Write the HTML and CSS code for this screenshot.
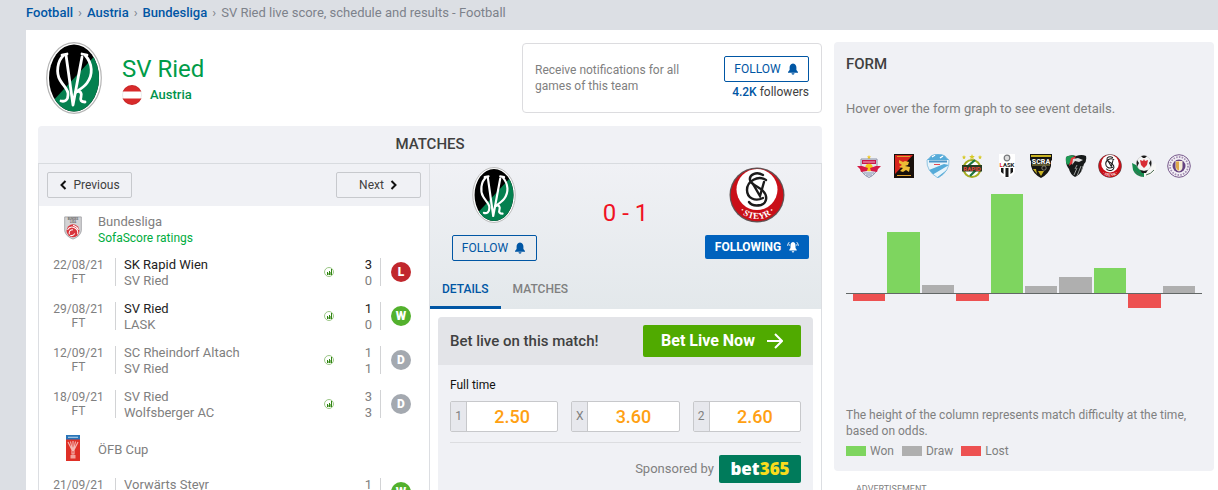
FILE: index.html
```html
<!DOCTYPE html>
<html lang="en">
<head>
<meta charset="utf-8">
<meta name="viewport" content="width=device-width, initial-scale=1">
<title>SV Ried live score, schedule and results - Football</title>
<link rel="stylesheet" href="styles.css">
</head>
<body>
<svg class="defs" aria-hidden="true">
  <defs>
    <clipPath id="ried-clip"><ellipse cx="28" cy="36" rx="25" ry="33.500"/></clipPath>
    <clipPath id="flag-clip"><circle cx="10" cy="10" r="10"/></clipPath>
    <clipPath id="wac-clip"><path d="M2 3q5-3 10-1q6-2 10 0q1 5-2 8l-2 6q-2 5-7 7q-5-3-6-8q-4-5-3-12z"/></clipPath>
    <clipPath id="hart-clip"><path d="M1 6Q4 4 5 2Q12-2 19 2Q20 4 23 6Q24 17 12 24Q0 17 1 6z"/></clipPath>
    <symbol id="ried" viewBox="0 0 56 72">
      <ellipse cx="28" cy="36" rx="27.3" ry="35.3" fill="#fff" stroke="#b5b5b5" stroke-width="1.2"/>
      <g clip-path="url(#ried-clip)">
        <path d="M0 0h56v72H0z" fill="#000"/>
        <path d="M56 6L6 60v12h50z" fill="#04804f"/>
      </g>
      <g fill="none" stroke="#fff" stroke-width="2.8" stroke-linecap="round" stroke-linejoin="round">
        <path d="M16 13l5-1M18 13C11 19 10 31 14 38c4 7 9 10 8 15c0 5-3 7-7 6"/>
        <path d="M20 13L27 63L36 15"/>
        <path d="M36 12l5 1M39 13c8 9 8 20 2 28c-3 4-8 7-11 9"/>
        <path d="M30 50c5-2 6 2 5 5c-1 3 0 5 4 5"/>
      </g>
    </symbol>
    <symbol id="steyr" viewBox="0 0 56 56">
      <circle cx="28" cy="28" r="27.5" fill="#5f5354"/>
      <circle cx="28" cy="28" r="26.3" fill="#c90f18"/>
      <circle cx="28" cy="22.5" r="20.5" fill="#fff"/>
      <g fill="none" stroke="#1b1b1b" stroke-width="2.4" stroke-linecap="round">
        <path d="M34 8C27 4 20 8 21 13c1 5 8 6 13 11c5 5 4 12-2 14c-5 1-10 0-12-3"/>
        <path d="M37 13c-8-5-19 1-19 10c0 8 8 12 16 8"/>
        <path d="M24 17l7 12l4-14"/>
      </g>
      <path id="steyr-arc" d="M6 37Q13 52 28 52Q43 52 50 37" fill="none"/>
      <text class="crest-steyr"><textPath href="#steyr-arc" startOffset="50%" text-anchor="middle">· STEYR ·</textPath></text>
    </symbol>
    <symbol id="bell" viewBox="0 0 12 12">
      <path d="M6 0.400C3.500 0.800 2.600 2.500 2.600 4.500V7L1 9v.7h10V9L9.400 7V4.500C9.400 2.500 8.500.8 6 .4z" fill="currentColor"/>
      <path d="M4.500 10.300h3c0 .8-.6 1.400-1.500 1.400s-1.500-.6-1.500-1.400z" fill="currentColor"/>
    </symbol>
    <symbol id="stats" viewBox="0 0 10 10">
      <circle cx="5" cy="5" r="4.500" fill="none" stroke="#8fbf78" stroke-width=".9"/>
      <path d="M3 5h1v3H3zM5 4h1v4H5zM7 2h1v6H7z" fill="#2f8412"/><path d="M4 6h1v2H4zM6 5h1v3H6z" fill="#8fbf78"/>
    </symbol>
  </defs>
</svg>

<nav class="breadcrumb" aria-label="Breadcrumb">
  <a href="#">Football</a><span>›</span><a href="#">Austria</a><span>›</span><a href="#">Bundesliga</a><span>›</span><span class="current">SV Ried live score, schedule and results - Football</span>
</nav>

<div class="page">
  <main class="main">
    <header class="team">
      <svg class="team-crest"><use href="#ried"/></svg>
      <div class="team-info">
        <h1>SV Ried</h1>
        <a class="country" href="#">
          <svg class="flag" viewBox="0 0 20 20"><g clip-path="url(#flag-clip)"><path fill="#fff" d="M0 0h20v20H0z"/><path fill="#d82a2b" d="M0 0h20v6.500H0zM0 13.500h20V20H0z"/></g><circle cx="10" cy="10" r="9.500" fill="none" stroke="#000" stroke-opacity=".08"/></svg>
          Austria
        </a>
      </div>
      <div class="notify">
        <p>Receive notifications for all games of this team</p>
        <div class="notify-side">
          <button class="btn btn-outline">FOLLOW <svg class="bell"><use href="#bell"/></svg></button>
          <div class="followers"><b>4.2K</b> followers</div>
        </div>
      </div>
    </header>

    <section class="matches">
      <h2 class="matches-title">MATCHES</h2>
      <div class="panels">
        <div class="list">
          <div class="pager">
            <button class="btn btn-page"><svg class="chev" viewBox="0 0 8 10"><path d="M6.500 1L2.500 5l4 4"/></svg>Previous</button>
            <button class="btn btn-page">Next<svg class="chev" viewBox="0 0 8 10"><path d="M1.500 1l4 4l-4 4"/></svg></button>
          </div>
          <div class="league">
            <svg class="league-logo" viewBox="0 0 24 26">
              <path d="M3 1h18v15q-1 6-9 9q-8-3-9-9z" fill="#d3d3d5" stroke="#a5a5a8"/>
              <text x="12" y="4.500" class="crest-tiny" fill="#666">BUNDES</text><text x="12" y="8" class="crest-tiny" fill="#666">LIGA</text>
              <circle cx="12" cy="16" r="7" fill="#d9343c"/>
              <path d="M6 15q3-5 8-2q4 2 3 7M8 20q-1-5 4-5M12 10q4 1 6 5M9 21q3 1 5-2" fill="none" stroke="#fff" stroke-width="1.100"/>
            </svg>
            <div><a class="league-name" href="#">Bundesliga</a><a class="ratings" href="#">SofaScore ratings</a></div>
          </div>
          <a class="match" href="#"><span class="date">22/08/21<br>FT</span><span class="teams"><b>SK Rapid Wien</b><br>SV Ried</span><svg class="stats"><use href="#stats"/></svg><span class="score"><b>3</b><br>0</span><span class="result"><i class="badge lost">L</i></span></a>
          <a class="match" href="#"><span class="date">29/08/21<br>FT</span><span class="teams"><b>SV Ried</b><br>LASK</span><svg class="stats"><use href="#stats"/></svg><span class="score"><b>1</b><br>0</span><span class="result"><i class="badge won">W</i></span></a>
          <a class="match" href="#"><span class="date">12/09/21<br>FT</span><span class="teams">SC Rheindorf Altach<br>SV Ried</span><svg class="stats"><use href="#stats"/></svg><span class="score">1<br>1</span><span class="result"><i class="badge draw">D</i></span></a>
          <a class="match" href="#"><span class="date">18/09/21<br>FT</span><span class="teams">SV Ried<br>Wolfsberger AC</span><svg class="stats"><use href="#stats"/></svg><span class="score">3<br>3</span><span class="result"><i class="badge draw">D</i></span></a>
          <div class="league cup">
            <svg class="league-logo" viewBox="0 0 24 26">
              <path d="M5 0h14v26H5z" fill="#df3027"/><path d="M5 0h14v4.500H5z" fill="#2874b8"/>
              <path d="M7 2.300h10" stroke="#a9cae6" stroke-width="1.200"/>
              <path d="M7 7l4 8v4h2v-4l4-8M9.500 6.500l2 9M14.500 6.500l-2 9M12 6v10" fill="none" stroke="#f5b9b4" stroke-width="1.100"/>
              <path d="M9.500 20h5v3.500h-5z" fill="#f2a39d"/>
            </svg>
            <div><a class="league-name" href="#">ÖFB Cup</a></div>
          </div>
          <a class="match" href="#"><span class="date">21/09/21<br>FT</span><span class="teams">Vorwärts Steyr<br>SV Ried</span><span class="stats"></span><span class="score">1<br>2</span><span class="result"><i class="badge won">W</i></span></a>
        </div>

        <div class="detail">
          <div class="scoreboard">
            <div class="versus">
              <div class="side">
                <svg class="side-crest"><use href="#ried"/></svg>
                <button class="btn btn-outline">FOLLOW <svg class="bell"><use href="#bell"/></svg></button>
              </div>
              <div class="result-score">0 - 1</div>
              <div class="side">
                <svg class="side-crest"><use href="#steyr"/></svg>
                <button class="btn btn-solid">FOLLOWING <svg class="bell" viewBox="0 0 12 12"><path d="M6 1C4 1.300 3.500 2.800 3.500 4.500V7L2.300 8.800v.7h7.400v-.7L8.500 7V4.500C8.500 2.800 8 1.300 6 1zM4.700 10.200h2.600q-.2 1.300-1.300 1.300t-1.300-1.300z" fill="currentColor"/><path d="M2.200 1.200Q.8 2.600.7 4.800M9.800 1.200q1.400 1.400 1.500 3.600M2.500 3.500v1M9.600 3.500v1" fill="none" stroke="currentColor" stroke-width="1"/></svg></button>
              </div>
            </div>
            <nav class="tabs"><a class="tab active" href="#">DETAILS</a><a class="tab" href="#">MATCHES</a></nav>
          </div>
          <div class="bet">
            <div class="bet-head">
              <span>Bet live on this match!</span>
              <a class="bet-now" href="#">Bet Live Now <svg viewBox="0 0 16 16"><path d="M0 8h15M8 1l7 7l-7 7"/></svg></a>
            </div>
            <div class="bet-body">
              <h3>Full time</h3>
              <div class="odds">
                <a class="odd" href="#"><span>1</span><b>2.50</b></a>
                <a class="odd" href="#"><span>X</span><b>3.60</b></a>
                <a class="odd" href="#"><span>2</span><b>2.60</b></a>
              </div>
              <div class="sponsor">Sponsored by <a class="bet365" href="#">bet<em>365</em></a></div>
            </div>
          </div>
        </div>
      </div>
    </section>
  </main>

  <aside class="aside">
    <section class="form">
      <h2>FORM</h2>
      <p class="hint">Hover over the form graph to see event details.</p>
      <div class="crests">
        <svg viewBox="0 0 24 24"><path d="M12 1l.7 1.500l1.500.1l-1.200 1l.4 1.600L12 4.400l-1.400.8l.4-1.600l-1.200-1l1.500-.1z" fill="#f3c81f"/><path d="M4 5h16v8q0 7-8 10.500Q4 20 4 13z" fill="#e3e5ec" stroke="#8b92a8" stroke-width="1"/><path d="M5 6h14v4H5z" fill="#ca174b"/><path d="M6 8h12" stroke="#f1c3d0" stroke-width=".9"/><circle cx="12" cy="13.500" r="3.800" fill="#f6c71c"/><path d="M0 12h5l6 2-1 3-6 1-1-3zM24 12h-5l-6 2 1 3 6 1 1-3z" fill="#d61a45"/><path d="M7 19h10M9 21h6" stroke="#8d97b5" stroke-width="1"/></svg>
        <svg viewBox="0 0 24 24"><path d="M2 0h20v24H2z" fill="#18100b"/><path d="M3 1h18L3 20z" fill="#d7251d"/><path d="M5 2.500h13M5 21.500h14" stroke="#dfa12c" stroke-width="1"/><path d="M7 6l4 2 2-1 4 1-1 3-3 1 5 1-1 5-3-2-3 2-3-1 3-3-4-1 3-2-3-2z" fill="#edbd35"/></svg>
        <svg viewBox="0 0 24 24"><g clip-path="url(#hart-clip)"><path d="M0 0h24v24H0z" fill="#e7f4fb"/><path d="M0 0h24v6H0zM3 16L18 10l5 1L6 21zM9 25L22 15v10z" fill="#55abd9"/><path d="M3 7.500h18" stroke="#4a94c6" stroke-width="2"/><path d="M6 3l3-2M14 4l3-2" stroke="#fff" stroke-width="1.500"/><path d="M8 10.500h6" stroke="#e54850" stroke-width="1"/></g><path d="M1 6Q4 4 5 2Q12-2 19 2Q20 4 23 6Q24 17 12 24Q0 17 1 6z" fill="none" stroke="#79b9dc" stroke-width=".8"/></svg>
        <svg viewBox="0 0 24 24"><circle cx="12" cy="14.500" r="8.500" fill="#fff" stroke="#a5ad22" stroke-width="2"/><path d="M8 12l7-6M10 22l8-8" stroke="#1f7840" stroke-width="2.300"/><path d="M2 11h20v6.500H2z" fill="#263c21"/><text x="12" y="16.500" class="crest-small" fill="#ef4740">RAPID</text><path d="M12 0l.8 2 2 .1-1.500 1.300.5 2L12 4.200l-1.800 1.200.5-2-1.500-1.300 2-.1zM4 1l.6 1.500 1.500.2-1.200 1 .3 1.600L4 4.500l-1.200.8.3-1.600-1.200-1 1.500-.2zM20 1l.6 1.500 1.500.2-1.200 1 .3 1.600-1.200-.8-1.200.8.3-1.600-1.200-1 1.500-.2z" fill="#d7ca27"/></svg>
        <svg viewBox="0 0 24 24"><path d="M4 0h16v17q-1 5-8 7q-7-2-8-7z" fill="#fff"/><path d="M6 14h2.500v6L6 18zM10.500 14h3v9h-3zM15.500 14H18v4l-2.500 2z" fill="#171717"/><circle cx="12" cy="4" r="2.800" fill="#ddd" stroke="#77797c" stroke-width="1.200"/><text x="12" y="12.500" class="crest-small" fill="#222"><tspan fill="#e31c25">L</tspan>ASK</text></svg>
        <svg viewBox="0 0 24 24"><path d="M1 0h22v6l-1 1v5q-2 8-10 12Q4 20 2 12V7L1 6z" fill="#171612"/><path d="M2 1h20v2H2zM9 17l3 5 3-5zM4 15l4 5-1-5z" fill="#c9b323"/><text x="12" y="9.500" class="crest-bold" fill="#f3f3ed">SCRA</text><path d="M3 11h18" stroke="#cbbe5d" stroke-width=".8"/><circle cx="15" cy="14" r="2.200" fill="none" stroke="#aaa996" stroke-width=".7"/></svg>
        <svg viewBox="0 0 24 24"><g clip-path="url(#wac-clip)"><path d="M0 0h24v24H0z" fill="#171a1a"/><path d="M2 2l8-1-1 5-5 5-2-2z" fill="#1e9a55"/><path d="M7 4l5-2-3 7-4 3z" fill="#e63a3d"/><path d="M9 5l5-1 5 2-4 2-4-1-3 4z" fill="#ddd"/><path d="M11 15l2-4M10 21l3-7M13 22l4-10M17 19l2-7" stroke="#a9abab" stroke-width=".9"/></g></svg>
        <svg><use href="#steyr"/></svg>
        <svg viewBox="0 0 24 24"><path d="M0 9l12 6v8q-8 0-11-7z" fill="#168b4e"/><path d="M24 9l-12 6v8q9-1 12-7z" fill="#f7f7f5"/><circle cx="12" cy="9.500" r="7.500" fill="#f4f4f4" stroke="#bbb" stroke-width=".5"/><path d="M9 2q3-1 6 0l-2 2h-2zM5 6l2 3-2 4q-1-4 0-7zM19 6l-2 3 2 4q1-4 0-7zM8 16l4 1 4-1-2 3h-4z" fill="#1b1b1b"/><path d="M8 6l3 1 1-2 1 2 3-1-1 5-3 3-3-3z" fill="#d92d35"/><path d="M3 17q3 4 7 5M14 21q5-1 8-5" stroke="#4a6b54" stroke-width="1" fill="none"/></svg>
        <svg viewBox="0 0 24 24"><circle cx="12" cy="12" r="11.300" fill="#f3f0f5" stroke="#76598b" stroke-width="1"/><circle cx="12" cy="12" r="9" fill="none" stroke="#a48fb4" stroke-width="1.800" stroke-dasharray="1.600 1.200"/><circle cx="12" cy="12" r="6.500" fill="#654381"/><path d="M8.500 7h7v6q0 3-3.500 4.500Q8.500 16 8.500 13z" fill="#f6ecd5"/><path d="M9 7.500h3v9q-3-1-3-4z" fill="#dfa94b"/></svg>
      </div>
      <div class="chart">
        <div class="col"><i class="bar down" style="height:7px"></i></div>
        <div class="col"><i class="bar win" style="height:61px"></i></div>
        <div class="col"><i class="bar" style="height:8px"></i></div>
        <div class="col"><i class="bar down" style="height:7px"></i></div>
        <div class="col"><i class="bar win" style="height:99px"></i></div>
        <div class="col"><i class="bar" style="height:7px"></i></div>
        <div class="col"><i class="bar" style="height:16px"></i></div>
        <div class="col"><i class="bar win" style="height:25px"></i></div>
        <div class="col"><i class="bar down" style="height:14px"></i></div>
        <div class="col"><i class="bar" style="height:7px"></i></div>
      </div>
      <p class="note">The height of the column represents match difficulty at the time, based on odds.</p>
      <ul class="legend">
        <li><i class="key win"></i>Won</li>
        <li><i class="key"></i>Draw</li>
        <li><i class="key down"></i>Lost</li>
      </ul>
    </section>
    <div class="ad">ADVERTISEMENT</div>
  </aside>
</div>
</body>
</html>
```
FILE: styles.css
```css
* { box-sizing: border-box; }
html, body { height: 100%; }
body {
  margin: 0;
  display: flex;
  flex-direction: column;
  overflow: hidden;
  background: #dcdfe4;
  color: #7f8080;
  font: 13px/16px Roboto, "Liberation Sans", sans-serif;
}
a { color: inherit; text-decoration: none; }
h1, h2, h3, p, ul { margin: 0; padding: 0; font-weight: 400; }
i, em { font-style: normal; }
button { font: inherit; cursor: pointer; }
svg { display: block; flex: none; }
.defs { position: absolute; width: 0; height: 0; }

.crest-steyr { font: 700 9px "Liberation Serif", serif; fill: #fff; }
.crest-tiny { font: 700 3px Roboto, sans-serif; text-anchor: middle; }
.crest-small { font: 700 6px Roboto, sans-serif; text-anchor: middle; }
.crest-bold { font: 900 7px Roboto, sans-serif; text-anchor: middle; }

.breadcrumb { flex: none; display: flex; gap: 5px; padding: 5px 26px 9px; color: #7d828b; }
.breadcrumb a { color: #0056a4; font-weight: 500; }

.page {
  flex: 1;
  min-height: 0;
  margin-left: 26px;
  padding: 12px 4px 0 12px;
  display: grid;
  grid-template-columns: minmax(0, 1fr) 380px;
  gap: 12px;
  background: #fff;
}

.team { display: flex; align-items: flex-start; padding-left: 8px; margin-bottom: 12px; }
.team-crest { width: 56px; height: 72px; }
.team-info { flex: 1; padding: 13px 0 0 20px; }
.team-info h1 { font-size: 24px; line-height: 28px; color: #009c48; }
.country { display: inline-flex; align-items: center; gap: 8px; margin-top: 2px; color: #00934c; font-weight: 500; }
.flag { width: 20px; height: 20px; }

.notify { display: flex; justify-content: space-between; align-items: center; width: 300px; height: 70px; margin-top: 1px; padding: 0 12px; border: 1px solid #dcdcdf; border-radius: 4px; font-size: 12px; }
.notify p { width: 160px; }
.notify-side { display: flex; flex-direction: column; align-items: flex-end; gap: 2px; }
.followers { color: #404040; }
.followers b { color: #0056a4; font-weight: 500; }

.btn { display: flex; align-items: center; justify-content: center; height: 26px; padding: 0; border-radius: 2px; font-size: 12px; line-height: 16px; }
.btn-outline { width: 85px; gap: 6px; color: #0056a4; background: #fff; border: 1px solid #0056a4; }
.btn-solid { width: 104px; height: 24px; gap: 6px; color: #fff; background: #0062bd; border: 0; font-weight: 700; }
.btn-page { width: 85px; gap: 6px; padding-bottom: 1px; color: #404040; background: #f0f1f5; border: 1px solid #c7c9cd; }
.bell { width: 12px; height: 12px; }
.chev { width: 8px; height: 10px; fill: none; stroke: #111; stroke-width: 2; }

.matches-title { height: 38px; padding: 10px 0; border-bottom: 1px solid #d8dbdf; border-radius: 4px 4px 0 0; background: #f0f1f5; color: #404040; font-size: 15px; font-weight: 500; text-align: center; }
.panels { display: grid; grid-template-columns: 1fr 1fr; border: solid #dcdee2; border-width: 0 1px; }
.list { border-right: 1px solid #dcdee2; }
.pager { display: flex; justify-content: space-between; padding: 8px; background: #f0f1f5; }
.league { display: flex; align-items: center; height: 44px; padding: 4px 0 0 22px; gap: 13px; }
.league-logo { width: 24px; height: 24px; margin-bottom: 5px; }
.cup .league-logo { height: 26px; }
.league-name, .ratings { display: block; }
.ratings { color: #00ac3e; font-size: 12px; }
.match { display: flex; align-items: center; height: 44px; padding-right: 18px; }
.date { width: 77px; padding: 0 0 0 3px; border-right: 1px solid #d2d3d5; line-height: 14px; text-align: center; font-size: 12px; }
.teams { flex: 1; padding: 1px 8px 0; }
.teams b, .score b { font-weight: 400; color: #222; }
.stats { width: 10px; height: 10px; }
.score { width: 38px; padding-top: 1px; text-align: right; }
.result { display: flex; align-items: center; height: 28px; margin-left: 8px; padding-left: 10px; border-left: 1px solid #d2d3d5; }
.badge { width: 20px; height: 20px; border-radius: 50%; color: #fff; font-size: 12px; line-height: 20px; font-weight: 900; text-align: center; }
.lost { background: #c1272d; }
.won { background: #53b12d; }
.draw { background: #a4a9b0; }

.scoreboard { background: linear-gradient(#f0f1f5, #e3e8eb); }
.versus { display: grid; grid-template-columns: 128px 1fr 128px; height: 106px; padding-top: 3px; }
.side { display: flex; flex-direction: column; align-items: center; gap: 12px; }
.side-crest { width: 56px; height: 56px; }
.scoreboard .btn-outline { background: transparent; }
.result-score { padding-top: 32px; text-align: center; color: #f01224; font-size: 24px; line-height: 28px; }
.tabs { display: flex; }
.tab { height: 39px; padding: 11px 12px 0; font-size: 12px; font-weight: 500; border-bottom: 3px solid transparent; }
.tab.active { color: #0056a4; border-color: #0056a4; }

.bet { margin: 8px 8px 0; border-radius: 4px 4px 0 0; overflow: hidden; background: #f0f1f5; }
.bet-head { display: flex; align-items: center; justify-content: space-between; height: 48px; padding: 0 12px; background: #e3e4e8; color: #404040; font-size: 15px; font-weight: 500; }
.bet-now { display: flex; align-items: center; justify-content: center; gap: 12px; width: 158px; height: 32px; border-radius: 2px; background: #50aa00; color: #fff; font-size: 16px; font-weight: 700; }
.bet-now svg { width: 16px; height: 16px; fill: none; stroke: #fff; stroke-width: 2; }
.bet-body { padding: 12px; }
.bet-body h3 { color: #111; font-size: 12px; }
.odds { display: grid; grid-template-columns: repeat(3, 1fr); gap: 13px; margin-top: 8px; padding-bottom: 10px; border-bottom: 1px solid #dcdde0; }
.odd { display: flex; height: 31px; line-height: 29px; border: 1px solid #c7c8cb; border-radius: 2px; background: #fff; text-align: center; }
.odd span { width: 16px; background: #e7e8ed; border-right: 1px solid #c7c8cb; font-size: 12px; }
.odd b { flex: 1; color: #ffa012; font-size: 18px; font-weight: 500; }
.sponsor { display: flex; align-items: center; justify-content: flex-end; gap: 5px; margin-top: 12px; }
.bet365 { width: 82px; height: 28px; border-radius: 2px; background: #007b5b; color: #fff; font: 800 17px/27px "Open Sans", sans-serif; text-align: center; }
.bet365 em { color: #f9dc1c; }

.form { padding: 14px 12px 12px; border-radius: 4px; background: #f0f1f5; }
.form h2 { color: #404040; font-size: 15px; font-weight: 500; }
.hint { margin-top: 29px; }
.crests { display: grid; grid-template-columns: repeat(10, 1fr); justify-items: center; margin: 37px 6px 0; }
.crests svg { width: 24px; height: 24px; }
.chart { display: grid; grid-template-columns: repeat(10, 1fr); height: 229px; padding: 15px 6px 0; background: linear-gradient(#626766, #626766) 0 115px / 100% 1px no-repeat; }
.col { display: grid; grid-template-rows: 100px 1fr; row-gap: 1px; padding: 0 1px; }
.bar { display: block; align-self: end; background: #afafaf; }
.bar.down { grid-row: 2; align-self: start; }
.bar.win, .key.win { background: #7ed55f; }
.bar.down, .key.down { background: #ed5151; }
.note { font-size: 12px; }
.legend { display: flex; gap: 8px; margin-top: 4px; list-style: none; font-size: 12px; }
.legend li { display: flex; align-items: center; gap: 4px; }
.key { width: 20px; height: 10px; background: #afafaf; }
.ad { padding: 12px 22px; font-size: 9px; line-height: 12px; }
```
